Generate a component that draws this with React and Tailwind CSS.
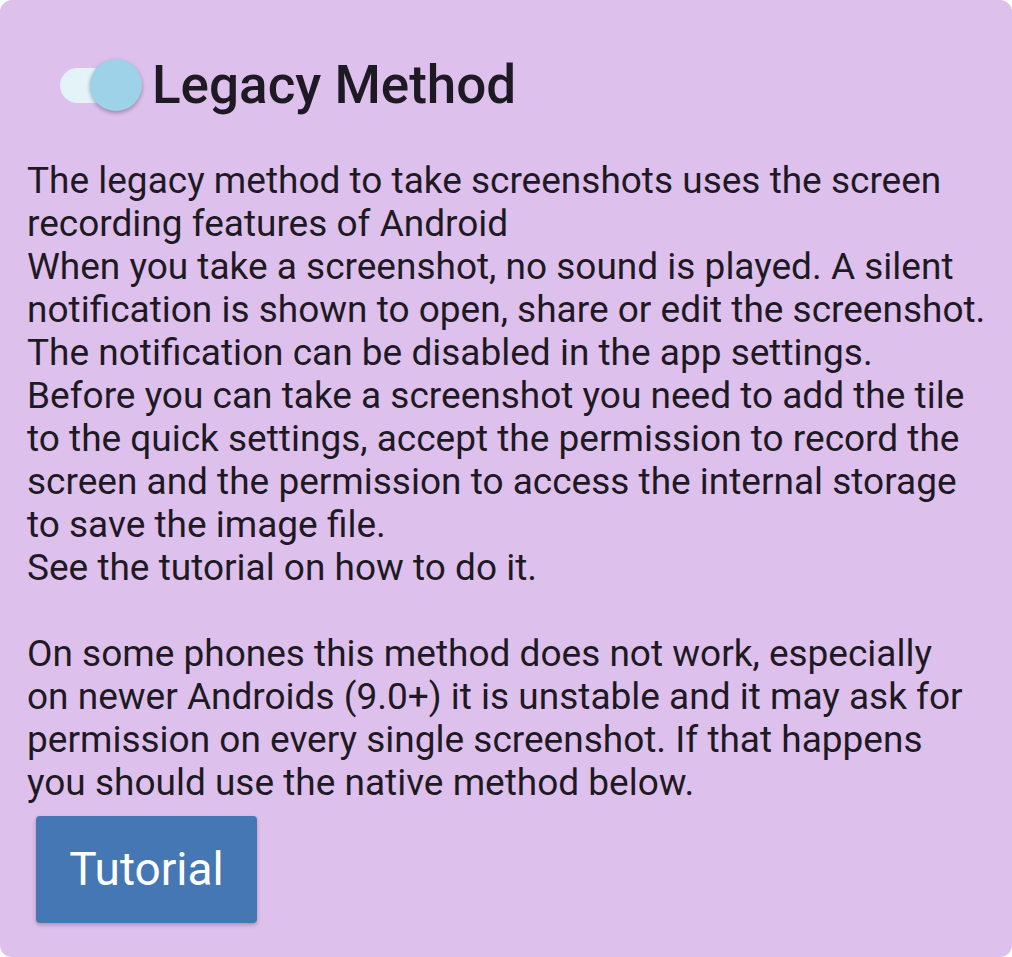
import React from 'react';

const lines = [
  'The legacy method to take screenshots uses the screen',
  'recording features of Android',
  'When you take a screenshot, no sound is played. A silent',
  'notification is shown to open, share or edit the screenshot.',
  'The notification can be disabled in the app settings.',
  'Before you can take a screenshot you need to add the tile',
  'to the quick settings, accept the permission to record the',
  'screen and the permission to access the internal storage',
  'to save the image file.',
  'See the tutorial on how to do it.',
  '',
  'On some phones this method does not work, especially',
  'on newer Androids (9.0+) it is unstable and it may ask for',
  'permission on every single screenshot. If that happens',
  'you should use the native method below.',
];

function Toggle() {
  return (
    <div className="relative h-[52px] w-[82px] shrink-0">
      <div className="absolute left-0 top-[9px] h-[35px] w-[62px] rounded-full bg-[#e3f3f8]" />
      <div className="absolute right-0 top-0 h-[52px] w-[52px] rounded-full bg-[#9dd2e8] shadow-[0_2px_4px_rgba(0,0,0,0.3)]" />
    </div>
  );
}

export default function App() {
  return (
    <div className="min-h-[957px] w-[1012px] bg-white font-['Roboto',sans-serif]">
      <div className="flex h-[957px] flex-col rounded-[12px] bg-[#dec0ed] pl-[27px] pr-[10px] pt-[54px] text-[#1e1a23]">
        <div className="flex items-center gap-[10px] pl-[33px]">
          <Toggle />
          <h1 className="text-[53px] font-medium leading-[62px]">Legacy Method</h1>
        </div>
        <div className="mt-[43px] text-[37px] leading-[43px]">
          {lines.map((line, i) => (
            <div key={i} className="h-[43px] whitespace-nowrap">
              {line}
            </div>
          ))}
        </div>
        <div className="mt-[12px] pl-[9px]">
          <button className="h-[107px] w-[221px] rounded-[4px] bg-[#4577b4] text-[46px] text-white shadow-[0_2px_4px_rgba(0,0,0,0.25)]">
            Tutorial
          </button>
        </div>
      </div>
    </div>
  );
}
